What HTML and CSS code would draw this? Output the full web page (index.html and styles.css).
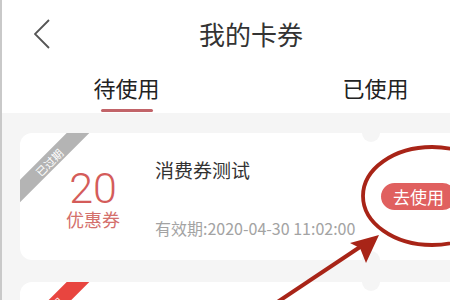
FILE: index.html
```html
<!DOCTYPE html>
<html lang="zh">
<head>
<meta charset="utf-8">
<link rel="stylesheet" href="styles.css">
</head>
<body>
<div class="page">
  <header class="topbar">
    <div class="back">
      <svg width="18" height="30" viewBox="0 0 18 30"><polyline points="15,1 1,15 15,29" fill="none" stroke="#555" stroke-width="1.8"/></svg>
    </div>
    <div class="title">我的卡券</div>
    <div></div>
  </header>
  <nav class="tabs">
    <div class="tab active"><span>待使用</span><i class="bar"></i></div>
    <div class="tab"><span>已使用</span></div>
  </nav>
  <main class="list">
    <div class="card">
      <div class="ribbon gray">已过期</div>
      <div class="amount">
        <div class="num">20</div>
        <div class="kind">优惠券</div>
      </div>
      <div class="info">
        <div class="name">消费券测试</div>
        <div class="date">有效期:2020-04-30 11:02:00</div>
      </div>
      <div class="use">去使用</div>
    </div>
    <div class="card">
      <div class="ribbon red">已过期</div>
    </div>
  </main>
  <svg class="mark" width="450" height="300" viewBox="0 0 450 300">
    <ellipse cx="432" cy="196" rx="69" ry="49" fill="none" stroke="#a82417" stroke-width="3.8"/>
    <line x1="276" y1="303" x2="366" y2="243" stroke="#a82417" stroke-width="4"/>
    <polygon points="379,235 350,243 360,248 366,263" fill="#a82417"/>
  </svg>
</div>
</body>
</html>
```
FILE: styles.css
```css
html, body {
  margin: 0;
  padding: 0;
  width: 450px;
  height: 300px;
  overflow: hidden;
  background: #fff;
}
.page {
  position: relative;
  width: 500px;
  height: 300px;
  box-sizing: border-box;
  border-left: 2px solid #c9c9c9;
  font-family: "Noto Sans CJK SC", "Noto Sans", sans-serif;
  color: #333;
}
.topbar {
  display: grid;
  grid-template-columns: 1fr auto 1fr;
  align-items: center;
  height: 66px;
}
.back {
  padding-left: 32px;
  display: flex;
  align-items: center;
  padding-top: 2px;
}
.back svg { display: block; }
.title {
  font-size: 26px;
  line-height: 32px;
  color: #333;
  padding-top: 2px;
}
.tabs {
  display: flex;
  height: 47px;
}
.tab {
  flex: 1;
  display: flex;
  flex-direction: column;
  align-items: center;
  padding-top: 8px;
  font-size: 22px;
  line-height: 27px;
  color: #222;
}
.tab .bar {
  display: block;
  width: 52px;
  height: 3px;
  margin-top: 8px;
  border-radius: 2px;
  background: #c26469;
}
.list {
  background: #f5f5f5;
  height: 187px;
  padding: 20px 20px 0 18px;
  display: flex;
  flex-direction: column;
  gap: 22px;
}
.card {
  position: relative;
  flex: none;
  height: 127px;
  background: #fff;
  border-radius: 12px;
  overflow: hidden;
  display: flex;
  align-items: flex-start;
}
.card::before,
.card::after {
  content: "";
  position: absolute;
  left: 342px;
  width: 18px;
  height: 18px;
  border-radius: 50%;
  background: #f5f5f5;
}
.card::before { top: -9px; }
.card::after { bottom: -9px; }
.ribbon {
  position: absolute;
  left: -21px;
  top: 21px;
  width: 100px;
  height: 16px;
  line-height: 16px;
  transform: rotate(-45deg);
  text-align: center;
  font-size: 11px;
  color: #fff;
}
.ribbon.gray { background: #b4b4b4; }
.ribbon.red { background: #e8453f; }
.amount {
  margin-left: 45px;
  padding-top: 35px;
  width: 56px;
  text-align: center;
}
.num {
  font-family: Roboto, "Noto Sans", sans-serif;
  font-weight: 300;
  font-size: 43px;
  line-height: 40px;
  color: #d45c5a;
}
.kind {
  font-size: 18px;
  line-height: 22px;
  color: #d4706c;
}
.info {
  margin-left: 34px;
  padding-top: 25px;
}
.name {
  font-size: 19px;
  line-height: 24px;
  color: #333;
}
.date {
  margin-top: 36px;
  font-size: 16px;
  line-height: 20px;
  color: #a3a3a3;
}
.use {
  margin-left: auto;
  margin-right: 24px;
  align-self: center;
  height: 27px;
  line-height: 27px;
  padding: 0 12px;
  border-radius: 14px;
  background: #e0605f;
  color: #fff;
  font-size: 17px;
}
.mark {
  position: absolute;
  left: -2px;
  top: 0;
  pointer-events: none;
}
```
